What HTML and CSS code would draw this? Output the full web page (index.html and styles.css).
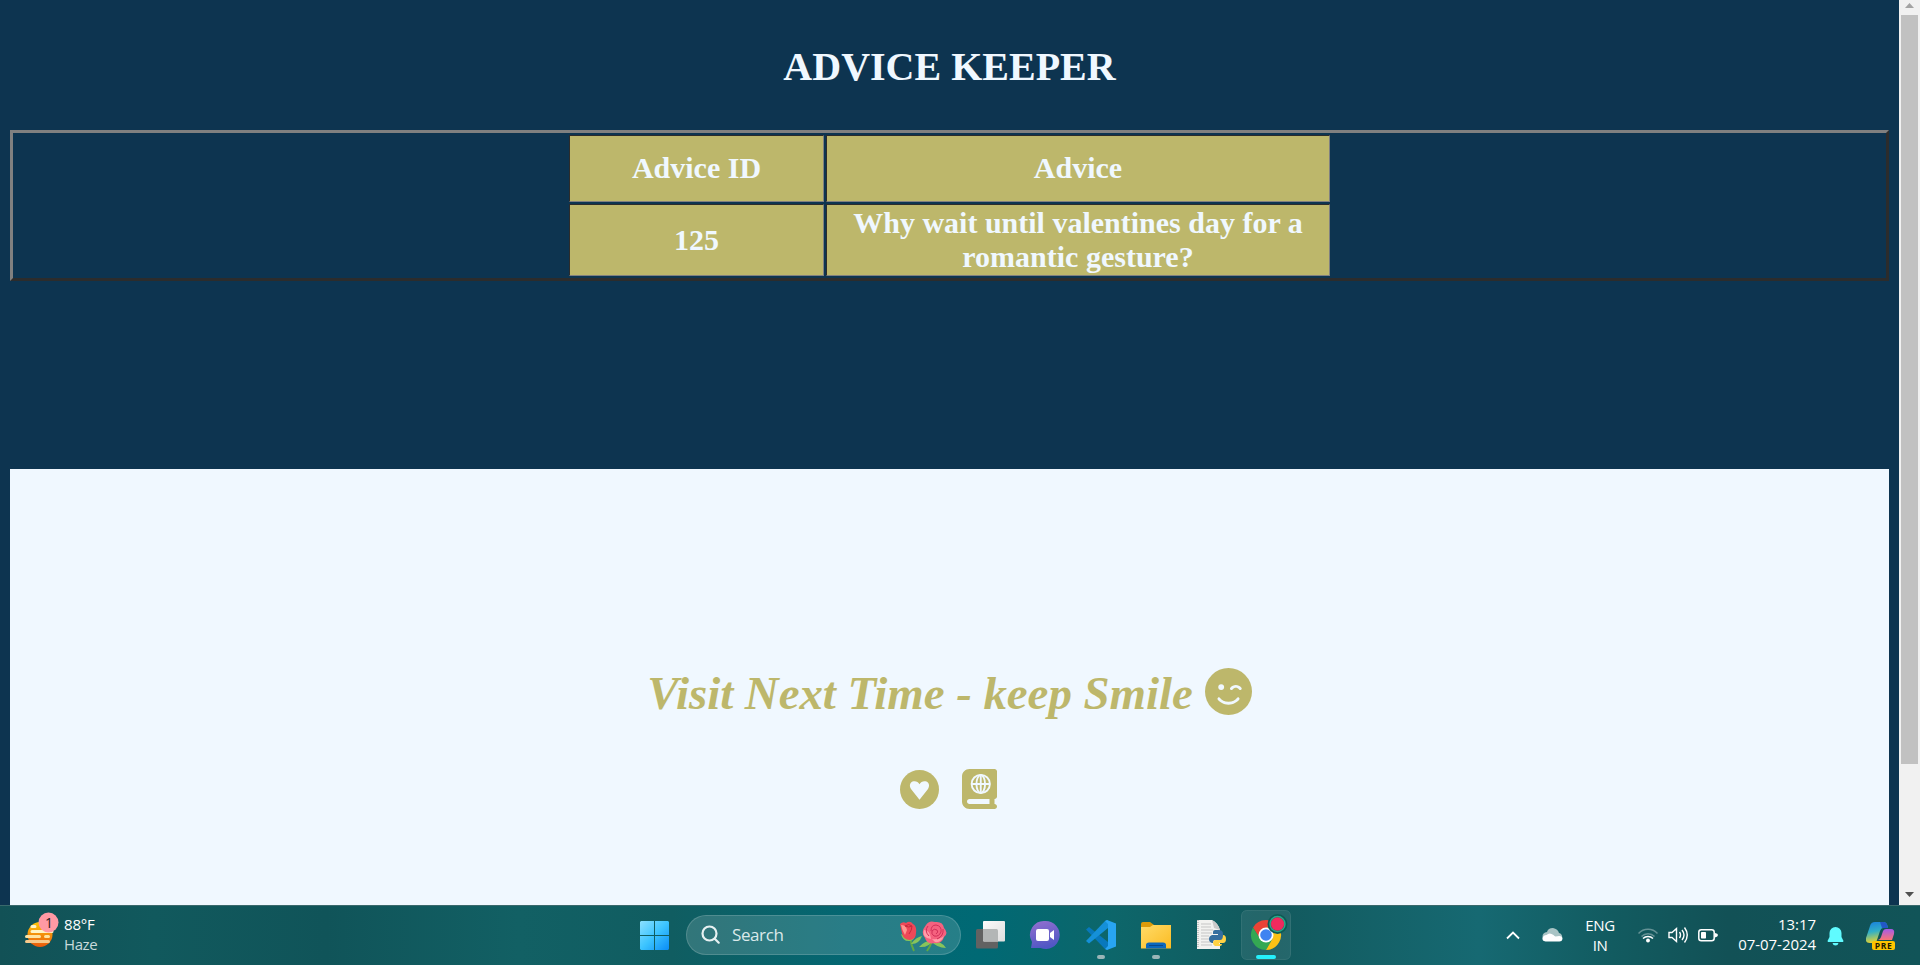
FILE: index.html
```html
<!DOCTYPE html>
<html lang="en">
<head>
<meta charset="utf-8">
<title>Advice Keeper</title>
<link rel="stylesheet" href="styles.css">
</head>
<body>
<div class="screen">
  <div class="viewport">
    <main class="page">
      <h1 class="title">ADVICE KEEPER</h1>
      <div class="frame">
        <div class="grid">
          <div class="cell head">Advice ID</div><div class="cell head">Advice</div>
          <div class="cell">125</div><div class="cell">Why wait until valentines day for a<br>romantic gesture?</div>
        </div>
      </div>
      <section class="panel">
        <div class="visit"><span>Visit Next Time - keep Smile</span>
          <svg class="wink" viewBox="0 0 512 512"><path fill="#bdb76b" d="M0 256a256 256 0 1 1 512 0A256 256 0 1 1 0 256z"/><g fill="#f0f8ff"><circle cx="176.400" cy="208" r="32"/><path d="M164.100 325.500C182 346.200 212.600 368 256 368s74-21.800 91.900-42.500c5.800-6.700 15.900-7.400 22.600-1.600s7.400 15.900 1.600 22.600C349.800 372.100 311.100 400 256 400s-93.800-27.900-116.100-53.500c-5.800-6.700-5.100-16.800 1.600-22.600s16.800-5.100 22.600 1.600zM300.800 233.600c-5.300 7.100-15.300 8.500-22.400 3.200s-8.500-15.300-3.200-22.400c30.400-40.500 91.200-40.500 121.600 0c5.300 7.100 3.900 17.100-3.200 22.400s-17.100 3.900-22.400-3.200c-17.600-23.500-52.800-23.500-70.400 0z"/></g></svg>
        </div>
        <div class="links">
          <svg class="heart" viewBox="0 0 39 39"><circle cx="19.500" cy="19.500" r="19.500" fill="#bdb76b"/><path fill="#f0f8ff" d="M19.500 29.700L11 19C9 16 10 12.600 12.500 11.600C15.200 10.700 18.200 11.600 19.500 14.200C20.800 11.600 23.800 10.700 26.500 11.600C29 12.600 30 16 28 19z"/></svg>
          <svg class="book" viewBox="0 0 448 512"><path fill="#bdb76b" fill-rule="evenodd" d="M0 96C0 43 43 0 96 0h320c17.700 0 32 14.300 32 32v320c0 17.700-14.300 32-32 32v64c17.700 0 32 14.300 32 32s-14.300 32-32 32H96c-53 0-96-43-96-96zm64 320c0 17.700 14.300 32 32 32h256v-64H96c-17.700 0-32 14.300-32 32z"/><g fill="none" stroke="#f0f8ff" stroke-width="24"><circle cx="240" cy="192" r="117"/><ellipse cx="240" cy="192" rx="55" ry="115"/><path d="M124 192h232M240 76v232"/></g></svg>
        </div>
      </section>
    </main>
    <aside class="scrollbar">
      <svg class="arrow" viewBox="0 0 20 15"><path fill="#a3a3a3" d="M6 8h9L10.500 3z"/></svg>
      <div class="thumb"></div>
      <svg class="arrow down" viewBox="0 0 20 20"><path fill="#505050" d="M6 7h9l-4.500 5z"/></svg>
    </aside>
  </div>

  <footer class="taskbar">
    <div class="weather">
      <svg width="40" height="60" viewBox="0 0 40 60">
        <defs><linearGradient id="sun" x2="0" y2="1"><stop offset="0" stop-color="#ffc60a"/><stop offset="1" stop-color="#e8590c"/></linearGradient></defs>
        <circle cx="20" cy="29.500" r="12.500" fill="url(#sun)"/>
        <g stroke-width="3" stroke-linecap="round"><path stroke="#fff3c4" d="M12 21.500h3M12 26.500h20"/><path stroke="#ffe3a0" d="M6.500 31.500h13M25.500 31.500h3"/><path stroke="#f7c98a" d="M6.500 36.500h22"/></g>
        <circle cx="28.500" cy="17.500" r="10" fill="#ff99a4"/><text x="29" y="22.500" text-anchor="middle" font-size="14" fill="#2b1a1c">1</text>
      </svg>
      <div class="lines"><span>88°F</span><span class="dim">Haze</span></div>
    </div>

    <div class="center">
      <svg width="29" height="60" viewBox="0 0 29 60"><defs><linearGradient id="win" gradientUnits="userSpaceOnUse" x1="0" y1="16" x2="29" y2="45"><stop offset="0" stop-color="#8be0ff"/><stop offset=".5" stop-color="#3cc4ff"/><stop offset="1" stop-color="#0a8cf5"/></linearGradient></defs><path fill="url(#win)" d="M1 16h13v14H0V17zM15 16h13l1 1v13H15zM0 31h14v14H1l-1-1zM15 31h14v13l-1 1H15z"/></svg>
      <div class="search">
        <svg width="20" height="20" viewBox="0 0 20 20" fill="none" stroke="#e8f1f2" stroke-width="2.200" stroke-linecap="round"><circle cx="8.500" cy="8.500" r="7"/><path d="M13.700 13.700l4 4"/></svg>
        <span>Search</span>
        <svg class="roses" width="50" height="32" viewBox="0 0 50 32">
          <g fill="none" stroke="#5fa844" stroke-width="2"><path d="M11 16q1 8 4 14M33 20q-2 6-5 10"/></g>
          <path fill="#87c45b" d="M2 13q2 8 9 7 5-1 5-7l-5 5zM12 23q5-7 11-8-3 8-10 8zM20 26q5-6 14-7-4 8-14 7zM32 20q11 0 15 7-9 0-15-7z"/>
          <path fill="#ee4858" d="M1 3q3-3 6-1 4-3 7 1 4 2 3 9 0 6-6 7-7 0-8-7z"/><path fill="#ff9690" d="M2 4q5 0 6 5l-2 5Q3 9 2 4z"/><path fill="none" stroke="#c52a3c" d="M6 5q4-3 7 0 0 4-3 8M6 5q4 2 7 0"/>
          <path fill="#f5627f" d="M27 4q3-5 9-3 8-1 9 6 5 5 0 9-2 7-9 6-8 2-10-5-5-6 1-13z"/><path fill="#ff9daa" d="M25 9q6 0 7 9l-4-1q-5-3-3-8zM33 18q7 1 12-3-3 7-9 6z"/><path fill="none" stroke="#d02f58" stroke-width="1" d="M32 10q0-6 5-6 6 1 5 7-2 5-7 4-3-2-2-5 2-3 5-1 2 2-1 4M29 5q-4 5 1 10M44 8q1 7-6 10"/>
        </svg>
      </div>
      <div class="apps">
        <svg viewBox="0 0 50 60"><defs><linearGradient id="tv" x2="1" y2="1"><stop offset="0" stop-color="#fbfbfb"/><stop offset="1" stop-color="#dedede"/></linearGradient></defs><rect x="10" y="24" width="22" height="19.500" rx="1.500" fill="#626262"/><rect x="17" y="16" width="22" height="20.500" rx="1" fill="url(#tv)"/><path fill="#b3b6b6" d="M17 24h13.500q1.500 0 1.500 1.500v11H18l-1-1z"/></svg>
        <svg viewBox="0 0 50 60"><defs><linearGradient id="chat" x2=".3" y2="1"><stop offset="0" stop-color="#9570d0"/><stop offset="1" stop-color="#5057c4"/></linearGradient></defs><path fill="url(#chat)" d="M24.500 16a14 14 0 1 1-5 27H10l1-6a14 14 0 0 1 13.500-21z"/><rect x="15" y="24" width="13" height="12" rx="2" fill="#fff"/><path fill="#fff" d="M29 28l4-3v10l-4-3z"/></svg>
        <svg viewBox="0 0 50 60"><path fill="#0878bc" d="M10 24.500l3-2.500 19 15v8l-3-1z"/><path fill="#1590d8" d="M10 36l3 2.500L32 23v-8l-3 1z"/><path fill="#28a5f2" d="M31 15l9 3.500v23L31 45l-2-1 3-3V19l-3-3z"/><rect x="21" y="50" width="8" height="4" rx="2" fill="#9ab5b7"/></svg>
        <svg viewBox="0 0 50 60"><defs><linearGradient id="fold" x2="1" y2="1"><stop offset="0" stop-color="#ffdb68"/><stop offset="1" stop-color="#fbbb22"/></linearGradient></defs><path fill="#dc9b0a" d="M10 19q0-2 2-2h7l4 3v6H10z"/><path fill="url(#fold)" d="M10 22h9l3-2h18v23.500H10z"/><path fill="#0b68bd" d="M15 43.500V40q0-2.500 3-2.500h14q3 0 3 2.500v3.500z"/><path stroke="#08488c" d="M18 40.500h14"/><rect x="21" y="50" width="8" height="4" rx="2" fill="#9ab5b7"/></svg>
        <svg viewBox="0 0 50 60"><path fill="#f2f2f0" d="M11 15h15q6 3 8 10v19H11z"/><path fill="#cacaca" d="M26 15q6 3 8 10l-6-2z"/><path stroke="#999" stroke-dasharray="1 1" d="M12 15v28"/><path stroke="#c5c5c5" d="M15 19h10M15 22h10M15 25h12M15 28h11M15 31h8M15 34h8M15 37h9M15 40h11"/><path fill="#356e9f" d="M29 25h4q4 0 4 4v3q0 3-3 3h-5q-2 0-2 3h-1q-3-1-3-4t3-4h6v-1h-5v-2q0-2 2-2z"/><path fill="#ffd244" d="M34 41h-5q-2-1-2-3 0-3 3-3h4q3 0 3-5 3 0 3 4 0 4-3 4h-4v1h3q0 2-2 2z"/></svg>
        <svg viewBox="0 0 50 60"><rect x=".5" y="5.500" width="49" height="49" rx="5" fill="#fff" fill-opacity=".08" stroke="#fff" stroke-opacity=".1"/><path fill="#ea4335" d="M12 22.500A15 15 0 0 1 38 22.500H25L19 33.800z"/><path fill="#34a853" d="M12 22.500A15 15 0 0 0 25 45L31.500 33.800H19z"/><path fill="#fbc116" d="M25 45A15 15 0 0 0 38 22.500H25L31.500 33.800z"/><circle cx="25" cy="30" r="7.500" fill="#fff"/><circle cx="25" cy="30" r="5.800" fill="#3f83f1"/><circle cx="36.500" cy="19" r="10" fill="#0c5b55"/><circle cx="36.500" cy="19" r="7.500" fill="#7c3a4f" stroke="#27a889" stroke-width="1.500"/><circle cx="36.500" cy="19" r="6.500" fill="#f02a5e"/><rect x="15" y="50" width="20" height="4" rx="2" fill="#25f0fb"/></svg>
      </div>
    </div>

    <div class="tray">
      <svg width="14" height="60" viewBox="0 0 14 60"><path fill="none" stroke="#fff" stroke-width="1.800" d="M1 33.500l6-6 6 6"/></svg>
      <svg class="cloud" width="21" height="60" viewBox="0 0 21 60"><path fill="#a9c4c5" d="M1 34q-2-6 4-7 1-4 6-4 5 1 6 5 4 1 3 6z"/><path fill="#fff" d="M3.500 36.500Q0 36 .5 33q1-3 4-3 3-3 7 0 1 1 2 1.500 7-2 7 2.500-.5 2.500-3 2.500z"/></svg>
      <div class="lines lang"><span>ENG</span><span>IN</span></div>
      <svg class="wifi" width="20" height="60" viewBox="0 0 20 60" fill="none" stroke="#fff" stroke-width="1.500"><path opacity=".35" d="M.5 28.500a13 13 0 0 1 19 0"/><path d="M3.500 31.500a9 9 0 0 1 13 0" opacity=".35"/><path d="M5 33.500a7 7 0 0 1 10 0"/><circle cx="10" cy="35.500" r="1.200" fill="#fff"/></svg>
      <svg class="sound" width="20" height="60" viewBox="0 0 20 60" fill="none" stroke="#fff" stroke-width="1.400"><path d="M1 27.500h3l4.500-4v13L4 32.500H1zM11.500 27q2 3 0 6M14 25q4 5 0 10M16.500 22.500q5.500 7.500 0 15"/></svg>
      <svg class="battery" width="20" height="60" viewBox="0 0 20 60"><rect x=".8" y="24.800" width="15.400" height="10.900" rx="2.500" fill="none" stroke="#fff" stroke-width="1.500"/><rect x="3" y="27" width="5" height="6.500" rx=".7" fill="#fff"/><path fill="#fff" d="M17 28q3 .5 3 2t-3 2.500z"/></svg>
      <div class="lines clock"><span>13:17</span><span>07-07-2024</span></div>
      <svg class="bell" width="17" height="60" viewBox="0 0 17 60"><path fill="#60fbff" d="M.5 36l2-4v-4a6 6 0 0 1 12 0v4l2 4-.5 1H1zM5.500 38h6q-.5 2.500-3 2.500t-3-2.500z"/></svg>
      <svg class="copilot" width="29" height="60" viewBox="0 0 29 60"><defs><linearGradient id="cpa" x2=".2" y2="1"><stop offset="0" stop-color="#187fe0"/><stop offset=".5" stop-color="#31afc6"/><stop offset="1" stop-color="#e3d332"/></linearGradient><linearGradient id="cpb" x2="0" y2="1"><stop offset="0" stop-color="#a65be8"/><stop offset="1" stop-color="#fb7474"/></linearGradient></defs><path fill="url(#cpa)" d="M9 17h9q3 0 4 6h-5q-2 0-3 3l-3 9q-1 3-4 3H4q-5 0-4-5l4-12q1-4 5-4z"/><path fill="#2257c7" d="M14 17h4q3 0 4 6h-6z"/><path fill="url(#cpb)" d="M20 24h5q4 0 3 5l-2 6H12q2 0 3-3l2-6q1-2 3-2z"/><rect x="6" y="36" width="23" height="9" rx="2" fill="#fdc500"/><text x="17.500" y="43.500" text-anchor="middle" font-size="8.500" font-weight="bold" letter-spacing=".6" fill="#221c00">PRE</text></svg>
    </div>
  </footer>
</div>
</body>
</html>
```
FILE: styles.css
```css
body { margin: 0; }
.screen { width: 1920px; height: 965px; overflow: hidden; background: #0d3450; }
.viewport { display: flex; height: 905px; }
.page { width: 1899px; display: flow-root; }
.title { margin: 44px 0 0; height: 86px; text-align: center; font: bold 40px/46px "Liberation Serif", serif; color: #f0f8ff; }
.frame { margin: 0 10px; height: 151px; box-sizing: border-box; border: 3px solid; border-color: #808080 #2c2c2c #2c2c2c #808080; display: flex; justify-content: center; padding-top: 2px; }
.grid { display: grid; grid-template-columns: 255px 504px; grid-template-rows: 67px 72px; gap: 2px; }
.cell { box-sizing: border-box; border: 1px solid; border-color: #2c2c2c #808080 #808080 #2c2c2c; background: #bdb76b; color: #f0f8ff; display: flex; align-items: center; justify-content: center; text-align: center; font: bold 30px/34px "Liberation Serif", serif; }
.head { padding-bottom: 2px; }
.panel { margin: 188px 10px 0; height: 436px; background: #f0f8ff; }
.visit { display: flex; justify-content: center; gap: 12px; padding-top: 197px; font: italic bold 46.875px/54px "Liberation Serif", serif; letter-spacing: -.03px; color: #bdb76b; }
.wink { width: 47px; height: 47px; margin-top: 2px; }
.links { display: flex; justify-content: center; gap: 23px; margin-top: 49px; padding-right: 2px; }
.heart { width: 39px; height: 39px; margin-top: .5px; }
.book { width: 35px; height: 40px; }
.scrollbar { width: 21px; background: #f1f1f1; }
.arrow { display: block; width: 20px; height: 15px; }
.thumb { width: 17px; height: 749px; margin-left: 2px; background: #c1c1c1; }
.down { height: 20px; margin-top: 121px; }

.taskbar { display: grid; grid-template-columns: 640px 1fr auto; height: 60px; box-shadow: inset 0 1px #3a696c; background: linear-gradient(90deg, #125156 0, #11595d 8%, #105459 17%, #126064 27%, #105d61 35%, #046772 44%, #006974 51%, #0d666a 58%, #12595d 66%, #166972 77%, #125b60 84%, #125156 90%, #115458 100%); color: #fff; font: 15px/20px "Open Sans", sans-serif; }
.taskbar svg { display: block; flex: none; }
.weather { display: flex; gap: 4px; padding-left: 20px; }
.lines { display: flex; flex-direction: column; padding-top: 9px; letter-spacing: -.2px; }
.dim { color: #c9dadb; letter-spacing: -.4px; }
.center { display: flex; }
.search { display: flex; align-items: center; box-sizing: border-box; width: 275px; height: 40px; margin: 10px 5px 0 17px; padding: 0 13px 0 14px; border: 1px solid rgba(255,255,255,.16); border-radius: 20px; background: rgba(255,255,255,.15); color: #dbe9ea; font-size: 17px; letter-spacing: -.4px; }
.search span { margin-left: 11px; }
.roses { margin: 3px -2px 0 auto; }
.apps { display: flex; gap: 5px; }
.apps svg { width: 50px; height: 60px; }
.tray { display: flex; padding-right: 25px; }
.cloud { margin-left: 22px; }
.lang { width: 30px; margin-left: 22px; padding-top: 10px; align-items: center; letter-spacing: -.4px; }
.wifi { margin-left: 23px; }
.sound, .battery { margin-left: 10px; }
.clock { width: 78px; margin-left: 20px; align-items: flex-end; letter-spacing: -.05px; white-space: nowrap; }
.bell { margin-left: 11px; }
.copilot { margin-left: 22px; }
```
